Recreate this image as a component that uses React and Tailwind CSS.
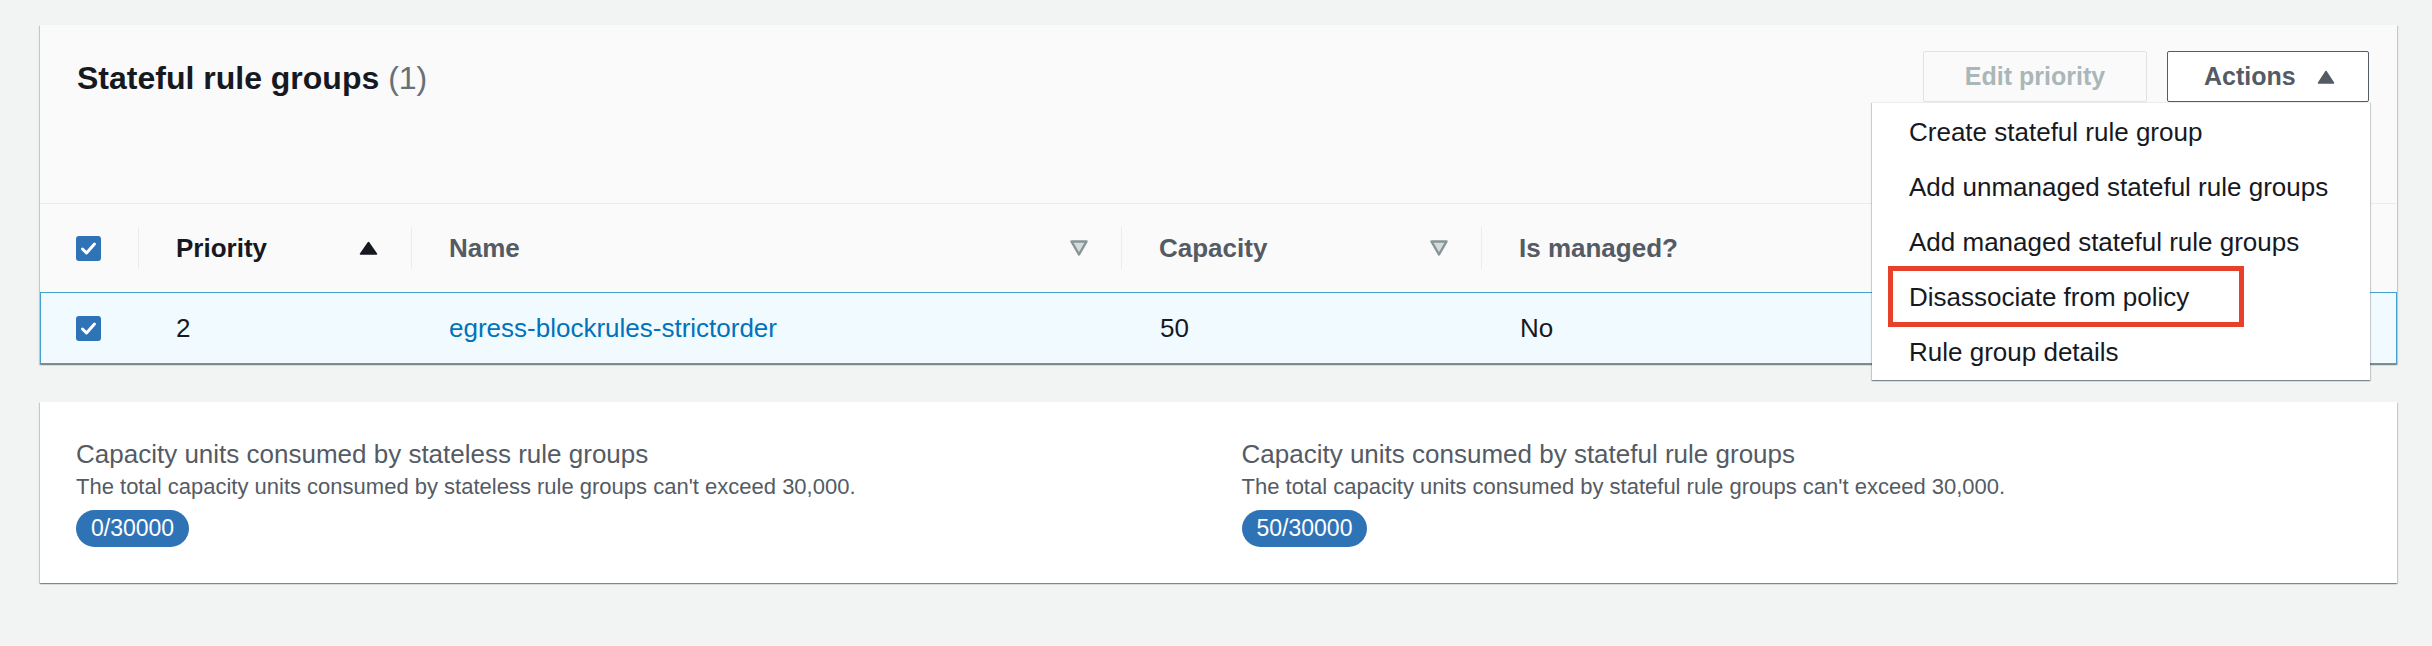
import React from 'react';

const FONT = { fontFamily: '"Liberation Sans", Arial, sans-serif' };

const SHADOW =
  'shadow-[0_1px_1px_0_rgba(0,28,36,0.3),1px_1px_1px_0_rgba(0,28,36,0.15),-1px_1px_1px_0_rgba(0,28,36,0.15)]';

function Checkbox() {
  return (
    <svg width="25" height="25" viewBox="0 0 25 25">
      <rect x="0" y="0" width="25" height="25" rx="3" fill="#2f73b7" />
      <path d="M6.5 13 L10.5 17 L18.5 8" fill="none" stroke="#fff" strokeWidth="3" strokeLinecap="round" strokeLinejoin="round" />
    </svg>
  );
}

function SortUp() {
  return (
    <svg width="19" height="14" viewBox="0 0 19 14">
      <path d="M1.5 13 L9.5 1.5 L17.5 13 Z" fill="#16191f" stroke="#16191f" strokeWidth="1.5" strokeLinejoin="round" />
    </svg>
  );
}

function SortNone() {
  return (
    <svg width="18" height="16" viewBox="0 0 18 16">
      <path d="M1.5 1.5 L16.5 1.5 L9 14.5 Z" fill="#d5dbdb" stroke="#879596" strokeWidth="2.5" strokeLinejoin="round" />
    </svg>
  );
}

function HeaderCell({ label, sort, active }) {
  return (
    <div className="flex h-full items-center">
      <div className="h-[42px] w-px bg-[#eaeded]" />
      <div className="flex flex-1 items-center justify-between pl-[37px] pr-[33px]">
        <span className={`text-[26px] font-bold ${active ? 'text-[#16191f]' : 'text-[#545b64]'}`}>{label}</span>
        {sort === 'up' && <SortUp />}
        {sort === 'none' && <SortNone />}
      </div>
    </div>
  );
}

const MENU = [
  'Create stateful rule group',
  'Add unmanaged stateful rule groups',
  'Add managed stateful rule groups',
  'Disassociate from policy',
  'Rule group details',
];

function ActionsMenu() {
  return (
    <div className={`absolute right-[-1px] top-full z-10 w-[498px] border-t border-[#eaeded] bg-white pt-[2px] ${SHADOW}`}>
      {MENU.map((m, i) => (
        <div key={m} className="relative flex h-[55px] items-center pl-[37px] text-[26px] text-[#16191f]">
          {m}
          {i === 3 && (
            <div className="pointer-events-none absolute left-[16px] top-[-4px] h-[61px] w-[356px] border-[5px] border-[#e8412b]" />
          )}
        </div>
      ))}
    </div>
  );
}

function Usage({ title, desc, value }) {
  return (
    <div>
      <div className="text-[26px] leading-[32px] text-[#545b64]">{title}</div>
      <div className="text-[22px] leading-[34px] text-[#545b64]">{desc}</div>
      <span className="mt-[6px] inline-flex h-[37px] items-center rounded-full bg-[#2f73b7] px-[15px] text-[23px] text-white">
        {value}
      </span>
    </div>
  );
}

export default function App() {
  return (
    <div style={FONT} className="min-h-[646px] bg-[#f2f3f3] pl-[40px] pr-[35px] pt-[25px]">
      {/* rule groups table */}
      <div className={`bg-[#fafafa] ${SHADOW}`}>
        <div className="flex h-[179px] items-start justify-between border-b border-[#eaeded] pl-[37px] pr-[28px] pt-[26px]">
          <h2 className="mt-[2px] text-[32px] leading-[51px] font-bold text-[#16191f]">
            Stateful rule groups <span className="font-normal text-[#687078]">(1)</span>
          </h2>
          <div className="flex gap-[20px]">
            <button className="h-[51px] w-[224px] rounded-[2px] border border-[#e1e4e4] bg-[#fafafa] text-[25px] font-bold text-[#aab7b8]">
              Edit priority
            </button>
            <div className="relative">
              <button className="flex h-[51px] w-[202px] items-center justify-between rounded-[2px] border border-[#545b64] bg-white pl-[36px] pr-[33px] text-[25px] font-bold text-[#545b64]">
                Actions
                <svg width="18" height="14" viewBox="0 0 18 14">
                  <path d="M1.5 13 L9 1.5 L16.5 13 Z" fill="#545b64" stroke="#545b64" strokeWidth="1.5" strokeLinejoin="round" />
                </svg>
              </button>
              <ActionsMenu />
            </div>
          </div>
        </div>

        <div className="grid h-[88px] grid-cols-[98px_273px_710px_360px_1fr]">
          <div className="flex items-center pl-[36px]">
            <Checkbox />
          </div>
          <HeaderCell label="Priority" sort="up" active />
          <HeaderCell label="Name" sort="none" />
          <HeaderCell label="Capacity" sort="none" />
          <HeaderCell label="Is managed?" />
        </div>

        <div className="grid h-[72px] grid-cols-[98px_273px_710px_360px_1fr] items-center border border-[#44a0cf] bg-[#f1faff] text-[26px] text-[#16191f]">
          <div className="pl-[35px] pt-[1px]">
            <Checkbox />
          </div>
          <div className="pl-[37px]">2</div>
          <div className="pl-[37px] text-[#0073bb]">egress-blockrules-strictorder</div>
          <div className="pl-[38px]">50</div>
          <div className="pl-[38px]">No</div>
        </div>
      </div>

      {/* capacity usage */}
      <div className={`mt-[38px] grid grid-cols-2 gap-x-[46px] bg-white px-[36px] pb-[36px] pt-[36px] ${SHADOW}`}>
        <Usage
          title="Capacity units consumed by stateless rule groups"
          desc="The total capacity units consumed by stateless rule groups can't exceed 30,000."
          value="0/30000"
        />
        <Usage
          title="Capacity units consumed by stateful rule groups"
          desc="The total capacity units consumed by stateful rule groups can't exceed 30,000."
          value="50/30000"
        />
      </div>
    </div>
  );
}
